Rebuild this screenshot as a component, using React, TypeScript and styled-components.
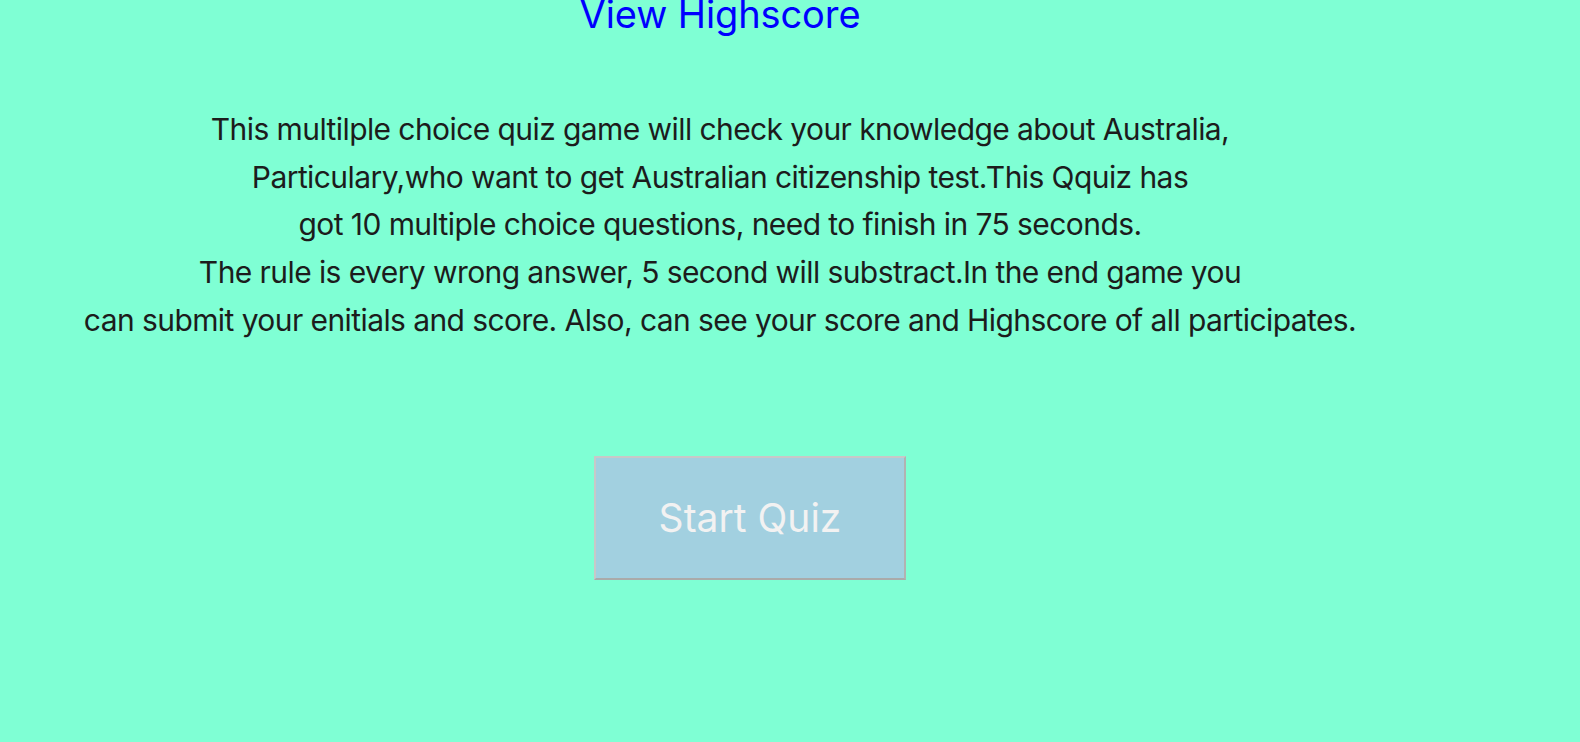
import React from "react";
import styled, { createGlobalStyle } from "styled-components";

const Global = createGlobalStyle`
  html, body { margin: 0; padding: 0; }
  body {
    background: #7fffd4;
    font-family: Inter, "Noto Sans", sans-serif;
    height: 742px;
    overflow: hidden;
  }
`;

const Page = styled.main`
  width: 1440px;
  display: flex;
  flex-direction: column;
  align-items: center;
`;

const Header = styled.header`
  display: flex;
  justify-content: center;
  width: 100%;
  margin-top: -8px;
`;

const HighscoreLink = styled.a`
  color: #0000ff;
  font-size: 38px;
  line-height: 44px;
  letter-spacing: -0.1px;
  text-decoration: none;
  cursor: pointer;
`;

const Intro = styled.p`
  margin: 70px 0 0;
  text-align: center;
  color: #1c1c1c;
  font-size: 30px;
  letter-spacing: -0.58px;
  line-height: 47.7px;
`;

const ButtonRow = styled.div`
  width: 100%;
  display: flex;
  justify-content: center;
  padding-left: 60px;
  box-sizing: border-box;
  margin-top: 111px;
`;

const StartButton = styled.button`
  width: 312px;
  height: 124px;
  background: #a2d0e0;
  color: #f2f2f2;
  font-family: Inter, "Noto Sans", sans-serif;
  font-size: 39px;
  border-style: solid;
  border-width: 2px;
  border-color: #c8c8c8 #b2b2b2 #aaaaaa #c8c8c8;
  cursor: pointer;
`;

export default function App() {
  return (
    <>
      <Global />
      <Page>
        <Header>
          <HighscoreLink>View Highscore</HighscoreLink>
        </Header>
        <Intro>
          This multilple choice quiz game will check your knowledge about Australia,
          <br />
          Particulary,who want to get Australian citizenship test.This Qquiz has
          <br />
          got 10 multiple choice questions, need to finish in 75 seconds.
          <br />
          The rule is every wrong answer, 5 second will substract.In the end game you
          <br />
          can submit your enitials and score. Also, can see your score and Highscore of all participates.
        </Intro>
        <ButtonRow>
          <StartButton>Start Quiz</StartButton>
        </ButtonRow>
      </Page>
    </>
  );
}
